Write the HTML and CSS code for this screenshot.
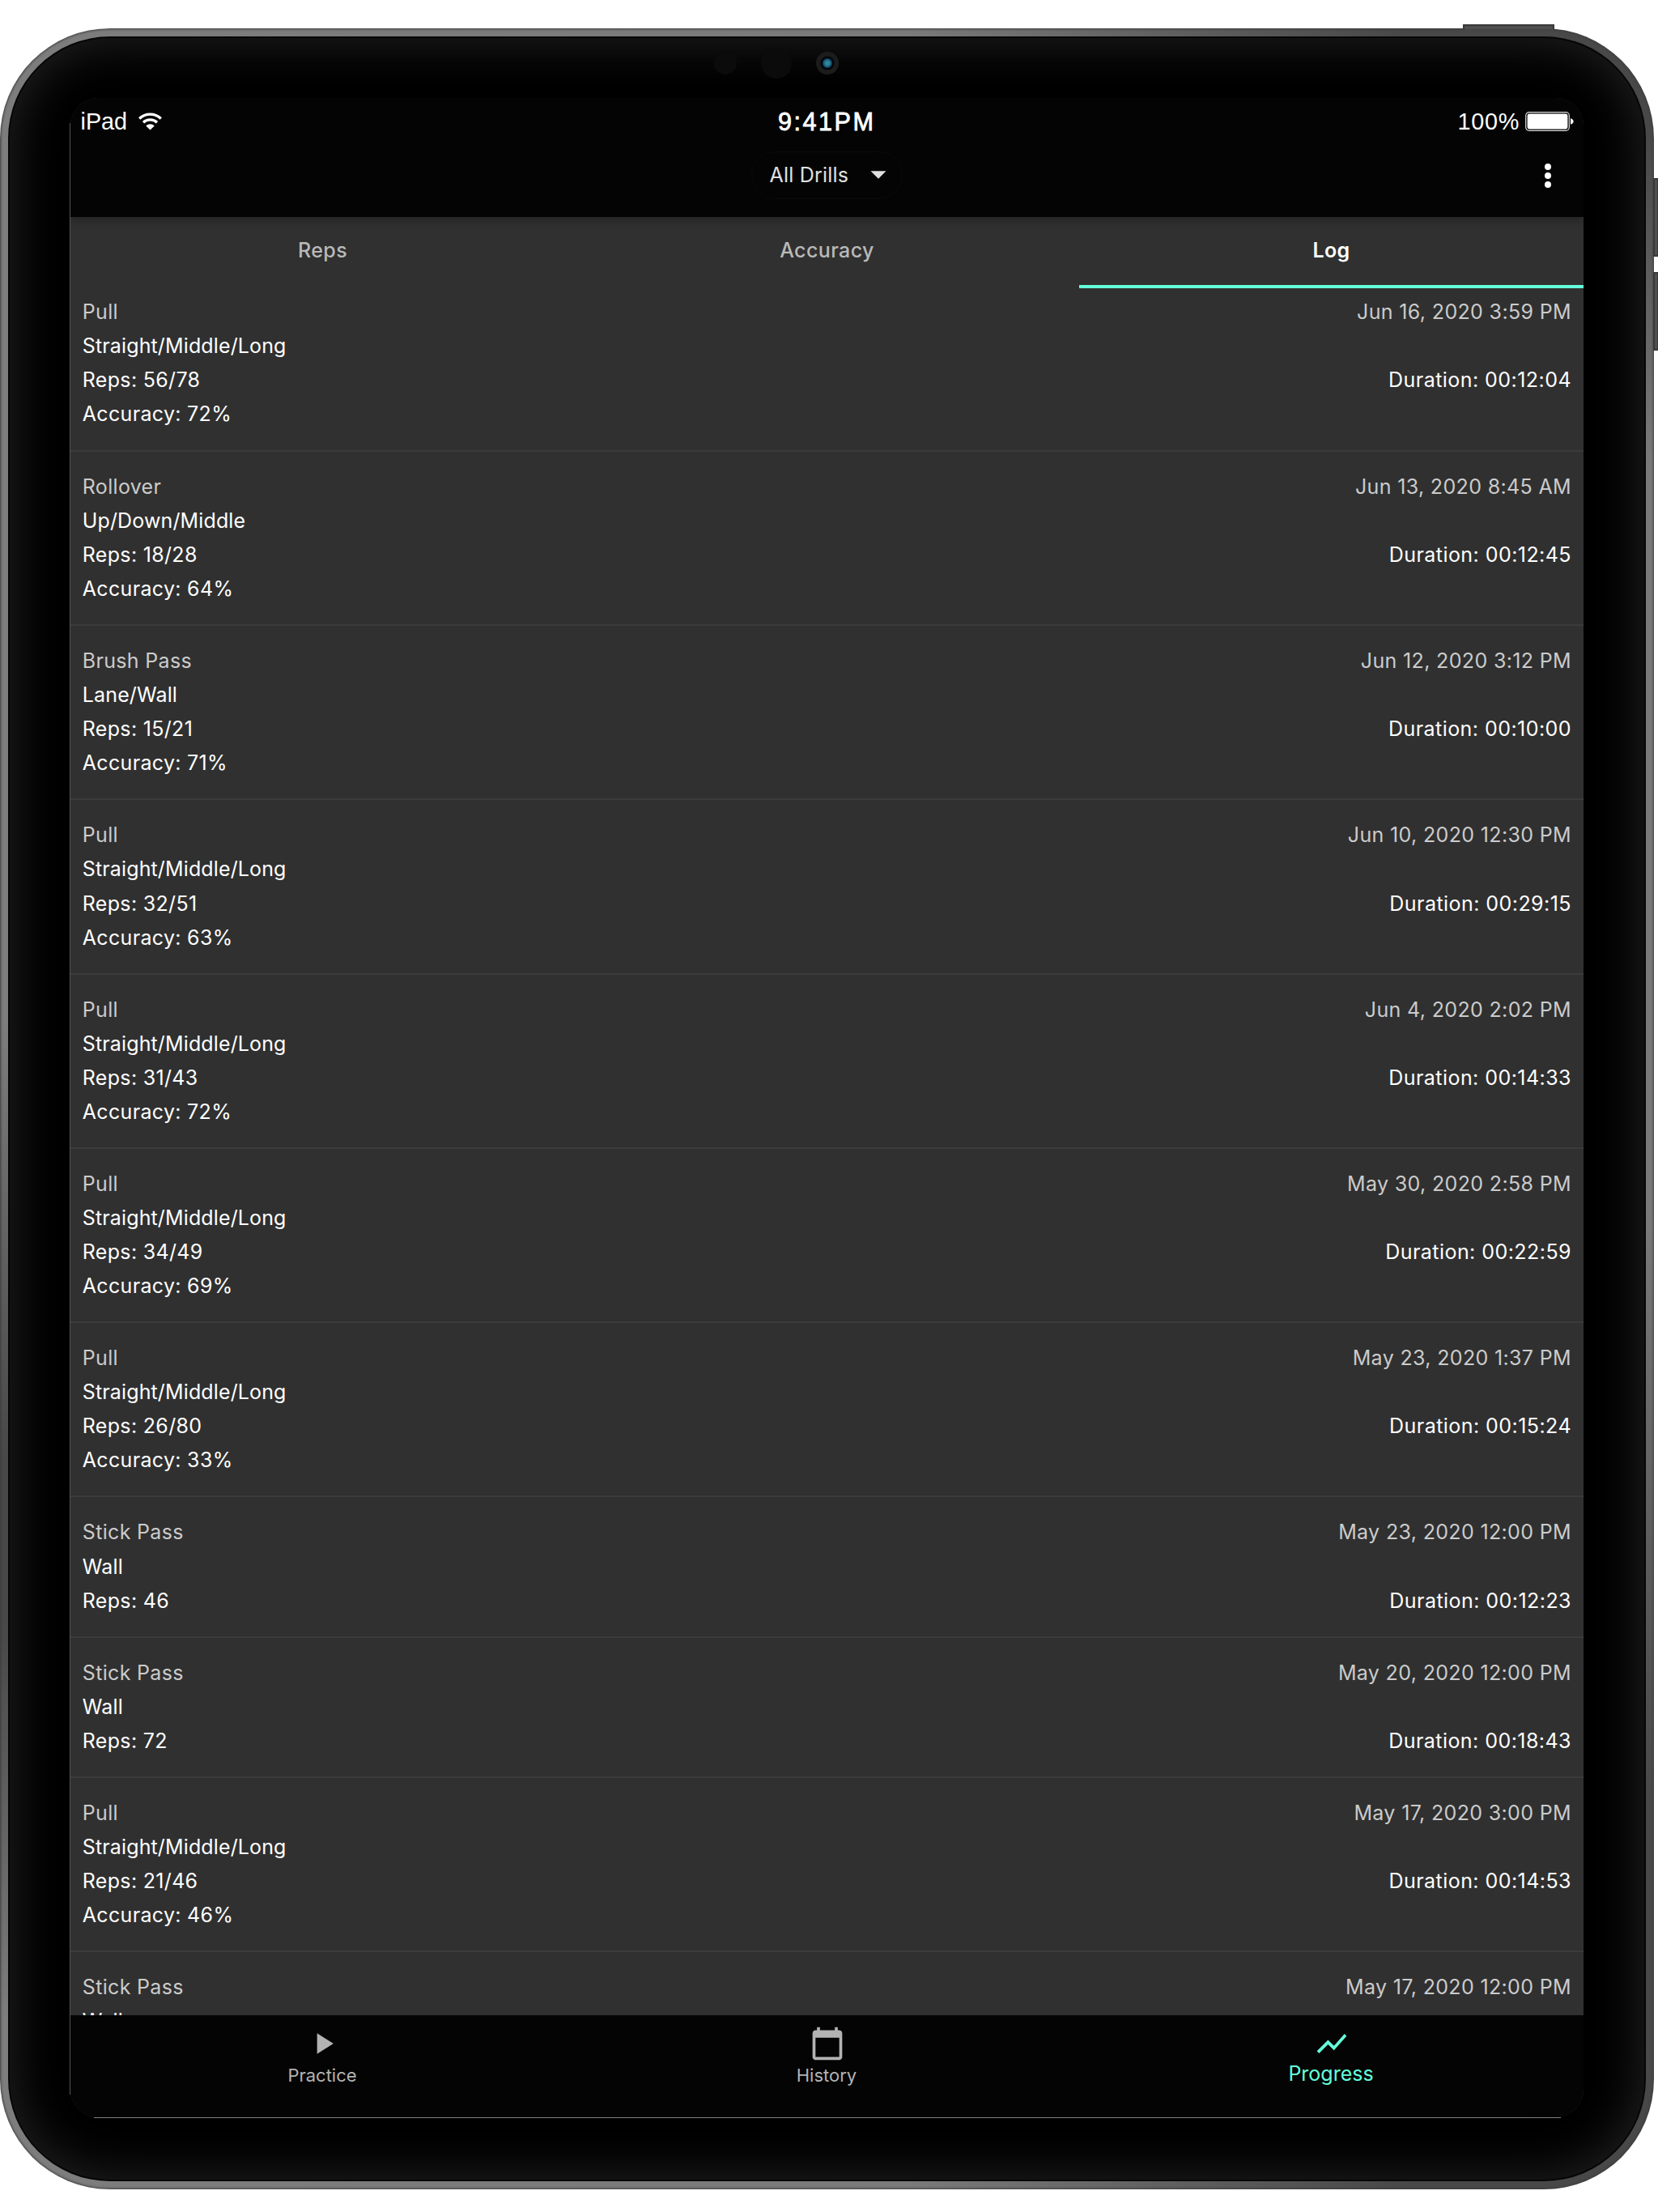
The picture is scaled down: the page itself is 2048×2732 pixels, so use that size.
FILE: index.html
```html
<!DOCTYPE html>
<html lang="en">
<head>
<meta charset="utf-8">
<title>Practice log</title>
<link rel="stylesheet" href="styles.css">
</head>
<body>
<div class="device">
  <span class="hw-button power"></span>
  <span class="hw-button volume-up"></span>
  <span class="hw-button volume-down"></span>
  <div class="bezel">
    <div class="sensors"><i class="sensor"></i><i class="sensor large"></i><i class="camera"></i></div>
    <div class="screen">
      <header class="top">
        <div class="status">
          <div class="carrier">iPad
            <svg class="wifi" viewBox="0 0 29 22"><g fill="none" stroke="#fff" stroke-width="3.4"><path d="M1.2 7.4C8.6.3 20.4.3 27.800 7.400"/><path d="M6 12.200C10.700 7.800 18.300 7.800 23 12.200"/></g><path fill="#fff" d="M9.300 16.400C12.300 13.600 16.700 13.600 19.700 16.400L14.500 21.500Z"/></svg>
          </div>
          <div class="clock">9:41PM</div>
          <div class="power-level">100%
            <svg class="battery" viewBox="0 0 60 24"><rect x=".7" y=".7" width="53.600" height="22.600" rx="4" fill="none" stroke="#ddd" stroke-width="1.200"/><rect x="2.600" y="2.600" width="49.800" height="18.800" rx="2.400" fill="#fff"/><path d="M56 8.300Q59.600 9.300 59.600 12T56 15.700Z" fill="#fff"/></svg>
          </div>
        </div>
        <div class="toolbar">
          <div class="picker"><span>All Drills</span><svg class="caret" viewBox="0 0 20 10"><path d="M.5.300h19L10 9.800z" fill="#e0e0e0"/></svg></div>
          <svg class="more" viewBox="0 0 8 30"><g fill="#fff"><circle cx="4" cy="4" r="4"/><circle cx="4" cy="15" r="4"/><circle cx="4" cy="26" r="4"/></g></svg>
        </div>
      </header>
      <nav class="tabs"><div class="tab">Reps</div><div class="tab">Accuracy</div><div class="tab active">Log</div></nav>
      <main class="log">
        <div class="entry"><div><p class="dim">Pull</p><p class="kind">Straight/Middle/Long</p><p>Reps: 56/78</p><p>Accuracy: 72%</p></div><div class="when"><p class="dim">Jun 16, 2020 3:59 PM</p><p>Duration: 00:12:04</p></div></div>
        <div class="entry"><div><p class="dim">Rollover</p><p class="kind">Up/Down/Middle</p><p>Reps: 18/28</p><p>Accuracy: 64%</p></div><div class="when"><p class="dim">Jun 13, 2020 8:45 AM</p><p>Duration: 00:12:45</p></div></div>
        <div class="entry"><div><p class="dim">Brush Pass</p><p class="kind">Lane/Wall</p><p>Reps: 15/21</p><p>Accuracy: 71%</p></div><div class="when"><p class="dim">Jun 12, 2020 3:12 PM</p><p>Duration: 00:10:00</p></div></div>
        <div class="entry"><div><p class="dim">Pull</p><p class="kind">Straight/Middle/Long</p><p>Reps: 32/51</p><p>Accuracy: 63%</p></div><div class="when"><p class="dim">Jun 10, 2020 12:30 PM</p><p>Duration: 00:29:15</p></div></div>
        <div class="entry"><div><p class="dim">Pull</p><p class="kind">Straight/Middle/Long</p><p>Reps: 31/43</p><p>Accuracy: 72%</p></div><div class="when"><p class="dim">Jun 4, 2020 2:02 PM</p><p>Duration: 00:14:33</p></div></div>
        <div class="entry"><div><p class="dim">Pull</p><p class="kind">Straight/Middle/Long</p><p>Reps: 34/49</p><p>Accuracy: 69%</p></div><div class="when"><p class="dim">May 30, 2020 2:58 PM</p><p>Duration: 00:22:59</p></div></div>
        <div class="entry"><div><p class="dim">Pull</p><p class="kind">Straight/Middle/Long</p><p>Reps: 26/80</p><p>Accuracy: 33%</p></div><div class="when"><p class="dim">May 23, 2020 1:37 PM</p><p>Duration: 00:15:24</p></div></div>
        <div class="entry"><div><p class="dim">Stick Pass</p><p class="kind">Wall</p><p>Reps: 46</p></div><div class="when"><p class="dim">May 23, 2020 12:00 PM</p><p>Duration: 00:12:23</p></div></div>
        <div class="entry"><div><p class="dim">Stick Pass</p><p class="kind">Wall</p><p>Reps: 72</p></div><div class="when"><p class="dim">May 20, 2020 12:00 PM</p><p>Duration: 00:18:43</p></div></div>
        <div class="entry"><div><p class="dim">Pull</p><p class="kind">Straight/Middle/Long</p><p>Reps: 21/46</p><p>Accuracy: 46%</p></div><div class="when"><p class="dim">May 17, 2020 3:00 PM</p><p>Duration: 00:14:53</p></div></div>
        <div class="entry"><div><p class="dim">Stick Pass</p><p class="kind">Wall</p></div><div class="when"><p class="dim">May 17, 2020 12:00 PM</p></div></div>
      </main>
      <nav class="bottom">
        <div class="item"><svg viewBox="0 0 24 24"><path d="M8 5v14l11-7z"/></svg><span>Practice</span></div>
        <div class="item"><svg viewBox="0 0 24 24"><path d="M20 3h-1V1h-2v2H7V1H5v2H4c-1.100 0-2 .9-2 2v16c0 1.100.9 2 2 2h16c1.100 0 2-.9 2-2V5c0-1.100-.9-2-2-2zm0 18H4V8h16v13z"/></svg><span>History</span></div>
        <div class="item active"><svg viewBox="0 0 24 24"><path d="M3.500 18.490l6-6.010 4 4L22 6.920l-1.410-1.410-7.090 7.970-4-4L2 16.990z"/></svg><span>Progress</span></div>
      </nav>
    </div>
  </div>
</div>
</body>
</html>
```
FILE: styles.css
```css
* { box-sizing: border-box; }
html, body { margin: 0; background: #fff; }
body { width: 2048px; height: 2732px; padding-top: 35px; overflow: hidden; font-family: Inter, sans-serif; }
p { margin: 0; }
svg { display: block; flex: none; }

.device {
  position: relative; width: 2043px; height: 2669px; padding: 10px;
  border-radius: 136px;
  background:
    linear-gradient(180deg, #7d7d7d 46%, #484848 66%, #484848 74%, #7d7d7d 92%) left / 12px 100% no-repeat,
    linear-gradient(180deg, #484848 5%, #7a7a7a 20%, #7a7a7a 55%, #484848 82%) right / 12px 100% no-repeat,
    linear-gradient(90deg, #7d7d7d 0%, #7a7a7a 55%, #484848 85%);
  box-shadow: inset 0 0 3px 1px #3c3c3c;
}
.hw-button { position: absolute; background: #4f4f4f; border: 2px solid #383838; }
.power { left: 1807px; top: -5px; width: 113px; height: 6px; border-bottom: 0; }
.volume-up, .volume-down { left: 2042px; width: 7px; height: 97px; }
.volume-up { top: 185px; }
.volume-down { top: 301px; }

/* Glass border; the two hairlines trace the left and bottom of the display */
.bezel {
  width: 2023px; height: 2649px; padding: 76px 0 0 77px;
  border-radius: 126px; position: relative;
  background:
    linear-gradient(#555, #555) 76px 107px / 1px 2435px no-repeat,
    linear-gradient(#808080, #808080) 106px 2570px / 1812px 1px no-repeat,
    #000;
  box-shadow: inset 0 0 0 2px #060606, inset 0 0 60px 6px #222;
}
.sensors { position: absolute; left: 872px; top: 13px; height: 40px; display: flex; align-items: center; }
.sensor { width: 28px; height: 28px; border-radius: 50%; background: #0b0b0b; margin-right: 30px; }
.sensor.large { width: 38px; height: 38px; }
.camera { width: 28px; height: 28px; border-radius: 50%; background: radial-gradient(circle, #2f8a92 0 2px, #14507a 5px, #02060c 6.500px 8px, #1c1c1c 9px); }

.screen {
  width: 1869px; height: 2494px; border-radius: 34px; overflow: hidden;
  background: #303030; display: flex; flex-direction: column;
}
.top { height: 147px; background: #040404; flex: none; z-index: 2; box-shadow: 0 2px 12px rgba(0,0,0,.35); }
.status { display: grid; grid-template-columns: 1fr auto 1fr; align-items: center; height: 58px; padding: 0 12px 0 12.500px; font: 28.800px "Liberation Sans", sans-serif; color: #fff; }
.carrier, .power-level { display: flex; align-items: center; }
.wifi { width: 29px; height: 22px; margin-left: 14px; }
.clock { font-size: 30.600px; letter-spacing: 2.500px; margin-left: -1px; -webkit-text-stroke: .8px #fff; }
.power-level { justify-content: flex-end; letter-spacing: .7px; }
.battery { width: 60px; height: 24px; margin-left: 7px; }
.toolbar { position: relative; display: flex; justify-content: center; padding-top: 8px; }
.picker { width: 187px; height: 59px; border: 1px solid #0b0b0b; border-radius: 30px; display: flex; align-items: center; justify-content: space-between; padding: 0 19px 1px 21.500px; font-size: 25px; letter-spacing: .2px; color: #e0e0e0; }
.caret { width: 20px; height: 10px; }
.more { position: absolute; right: 40px; top: 23px; width: 8px; height: 30px; }

.tabs { height: 88px; flex: none; display: grid; grid-template-columns: repeat(3, 1fr); font-size: 25px; font-weight: 500; letter-spacing: .4px; text-align: center; color: #b9b9b9; z-index: 1; }
.tab { height: 88px; line-height: 82.500px; border-bottom: 4px solid transparent; }
.tab.active { color: #fff; font-weight: 600; border-color: #64ffda; }

.log { flex: 1; min-height: 0; overflow: hidden; font-size: 25px; letter-spacing: .32px; line-height: 42.100px; color: #fff; }
.entry { display: flex; justify-content: space-between; padding: 22px 15px 22.900px 14.800px; border-bottom: 2px solid #3b3b3b; }
.entry:first-child { padding-top: 7.800px; padding-bottom: 23.700px; }
.kind { letter-spacing: .13px; }
.when { text-align: right; letter-spacing: .45px; }
.when .dim { margin-bottom: 42.100px; letter-spacing: .35px; }
.dim { color: #cbcbcb; }

.bottom { height: 126px; flex: none; display: grid; grid-template-columns: repeat(3, 1fr); background: #040404; color: #b3b3b3; font-size: 22px; }
.item { display: flex; flex-direction: column; align-items: center; padding-top: 13px; }
.item svg { width: 44px; height: 44px; fill: currentColor; }
.item span { line-height: 30px; margin: 2px 1px 0 0; }
.item.active { color: #64ffda; }
.item.active span { font-size: 25px; margin-top: 0; }
```
